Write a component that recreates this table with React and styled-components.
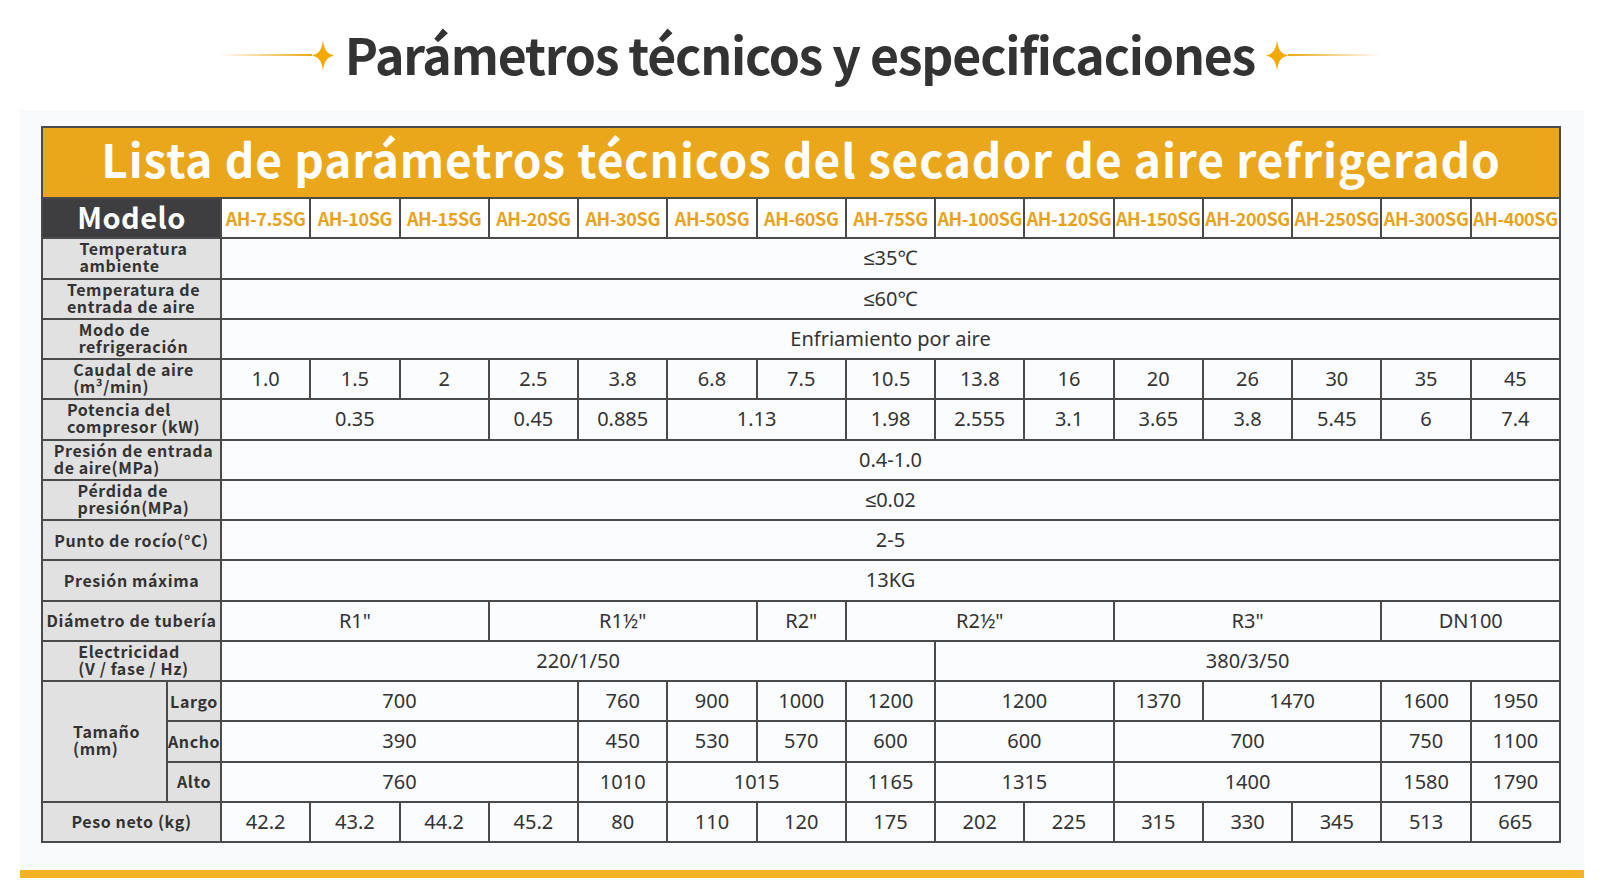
import React from "react";
import styled, { createGlobalStyle } from "styled-components";

const GlobalStyle = createGlobalStyle`
  html, body {
    margin: 0;
    padding: 0;
    background: #ffffff;
  }
  body {
    font-family: "Noto Sans CJK SC", "Noto Sans", sans-serif;
  }
`;

const Page = styled.div`
  width: 1600px;
  height: 896px;
  background: #ffffff;
  overflow: hidden;
`;

const Header = styled.header`
  height: 110px;
  display: flex;
  align-items: center;
  justify-content: center;
`;

const Rule = styled.span`
  display: block;
  width: 94px;
  height: 2px;
  background: linear-gradient(
    ${(props) => (props.flip ? "to left" : "to right")},
    rgba(236, 168, 24, 0),
    #eca818
  );
`;

const Star = styled.svg`
  display: block;
  width: 22px;
  height: 31px;
  flex: none;
`;

const Heading = styled.h1`
  margin: 0 11px;
  font-family: "Noto Sans CJK SC", sans-serif;
  font-weight: 700;
  font-size: 50px;
  letter-spacing: -1.2px;
  line-height: 1;
  color: #333333;
  padding-bottom: 4px;
  white-space: nowrap;
`;

const Panel = styled.section`
  margin-left: 20px;
  width: 1564px;
  background: #f9fafc;
  padding-top: 16px;
  box-sizing: border-box;
`;

const Table = styled.table`
  margin-left: 21px;
  width: 1520px;
  border-collapse: collapse;
  table-layout: fixed;
`;

const Row = styled.tr`
  height: ${(props) => props.height || "40.25px"};
`;

const Title = styled.th`
  border: 2px solid #4a4a4a;
  background: #eaa71b;
  color: #ffffff;
  font-family: "Noto Sans CJK SC", sans-serif;
  font-weight: 700;
  font-size: 46px;
  letter-spacing: 0.9px;
  line-height: 1;
  padding: 0 0 9px;
  white-space: nowrap;
`;

const ModelHead = styled.th`
  border: 2px solid #4a4a4a;
  background: #3e3e40;
  color: #ffffff;
  font-family: "Noto Sans CJK SC", sans-serif;
  font-weight: 700;
  font-size: 29px;
  letter-spacing: 0.5px;
  line-height: 1;
  padding: 0 0 3px;
`;

const ModelCell = styled.th`
  border: 2px solid #4a4a4a;
  background: #ffffff;
  color: #e8a21c;
  font-family: "Noto Sans CJK SC", sans-serif;
  font-weight: 700;
  font-size: 18px;
  letter-spacing: -0.4px;
  line-height: 1;
  white-space: nowrap;
  overflow: visible;
  padding: 0;
`;

const Label = styled.th`
  border: 2px solid #4a4a4a;
  background: #e1e1e1;
  color: #333333;
  font-family: "Noto Sans CJK SC", sans-serif;
  font-weight: 700;
  font-size: 16px;
  letter-spacing: 0.6px;
  line-height: 17px;
  padding: 0;
  white-space: nowrap;
`;

const LabelText = styled.span`
  display: inline-block;
  text-align: left;
  padding: ${(props) => (props.lines ? "0 0 2px 4px" : "0")};
`;

const Cell = styled.td`
  border: 2px solid #4a4a4a;
  background: #fbfcfe;
  color: #333333;
  font-family: "Noto Sans", sans-serif;
  font-weight: 400;
  font-size: 20px;
  line-height: 1.2;
  text-align: center;
  padding: 0;
  white-space: nowrap;
`;

const BottomBar = styled.div`
  margin-top: 27px;
  height: 8px;
  background: #f5b224;
`;

const StarIcon = () => (
  <Star viewBox="0 0 22 31">
    <path
      d="M11 0 C12 8.5 14 13.5 22 15.5 C14 17.5 12 22.5 11 31 C10 22.5 8 17.5 0 15.5 C8 13.5 10 8.5 11 0 Z"
      fill="#f2a900"
    />
  </Star>
);

const models = [
  "AH-7.5SG",
  "AH-10SG",
  "AH-15SG",
  "AH-20SG",
  "AH-30SG",
  "AH-50SG",
  "AH-60SG",
  "AH-75SG",
  "AH-100SG",
  "AH-120SG",
  "AH-150SG",
  "AH-200SG",
  "AH-250SG",
  "AH-300SG",
  "AH-400SG",
];

const each = (list) => list.map((v) => [v, 1]);

const rows = [
  { label: ["Temperatura", "ambiente"], cells: [["≤35℃", 15]] },
  { label: ["Temperatura de", "entrada de aire"], cells: [["≤60℃", 15]] },
  { label: ["Modo de", "refrigeración"], cells: [["Enfriamiento por aire", 15]] },
  {
    label: ["Caudal de aire", " (m³/min)"],
    cells: each([
      "1.0", "1.5", "2", "2.5", "3.8", "6.8", "7.5", "10.5",
      "13.8", "16", "20", "26", "30", "35", "45",
    ]),
  },
  {
    label: [" Potencia del", " compresor (kW)"],
    cells: [
      ["0.35", 3], ["0.45", 1], ["0.885", 1], ["1.13", 2], ["1.98", 1],
      ["2.555", 1], ["3.1", 1], ["3.65", 1], ["3.8", 1], ["5.45", 1],
      ["6", 1], ["7.4", 1],
    ],
  },
  { label: ["Presión de entrada", "de aire(MPa)"], cells: [["0.4-1.0", 15]] },
  { label: ["Pérdida de", "presión(MPa)"], cells: [["≤0.02", 15]] },
  { label: ["Punto de rocío(°C)"], cells: [["2-5", 15]] },
  { label: ["Presión máxima"], cells: [["13KG", 15]] },
  {
    label: ["Diámetro de tubería"],
    cells: [
      ['R1"', 3], ['R1½"', 3], ['R2"', 1], ['R2½"', 3], ['R3"', 3], ["DN100", 2],
    ],
  },
  {
    label: ["Electricidad", "(V / fase / Hz)"],
    cells: [["220/1/50", 8], ["380/3/50", 7]],
  },
];

const sizeRows = [
  {
    label: "Largo",
    cells: [
      ["700", 4], ["760", 1], ["900", 1], ["1000", 1], ["1200", 1],
      ["1200", 2], ["1370", 1], ["1470", 2], ["1600", 1], ["1950", 1],
    ],
  },
  {
    label: "Ancho",
    cells: [
      ["390", 4], ["450", 1], ["530", 1], ["570", 1], ["600", 1],
      ["600", 2], ["700", 3], ["750", 1], ["1100", 1],
    ],
  },
  {
    label: "Alto",
    cells: [
      ["760", 4], ["1010", 1], ["1015", 2], ["1165", 1], ["1315", 2],
      ["1400", 3], ["1580", 1], ["1790", 1],
    ],
  },
];

const weights = each([
  "42.2", "43.2", "44.2", "45.2", "80", "110", "120", "175",
  "202", "225", "315", "330", "345", "513", "665",
]);

const renderCells = (cells) =>
  cells.map(([value, span], i) => (
    <Cell key={i} colSpan={span}>
      {value}
    </Cell>
  ));

const App = () => {
  return (
    <Page>
      <GlobalStyle />
      <Header>
        <Rule />
        <StarIcon />
        <Heading>Parámetros técnicos y especificaciones</Heading>
        <StarIcon />
        <Rule flip />
      </Header>
      <Panel>
        <Table>
          <colgroup>
            <col style={{ width: "125px" }} />
            <col style={{ width: "54px" }} />
            {models.map((m) => (
              <col key={m} />
            ))}
          </colgroup>
          <tbody>
            <Row height="71px">
              <Title colSpan={17}>
                Lista de parámetros técnicos del secador de aire refrigerado
              </Title>
            </Row>
            <Row>
              <ModelHead colSpan={2}>Modelo</ModelHead>
              {models.map((m) => (
                <ModelCell key={m}>{m}</ModelCell>
              ))}
            </Row>
            {rows.map((row, i) => (
              <Row key={i}>
                <Label colSpan={2}>
                  <LabelText lines={row.label.length > 1}>
                    {row.label.map((line, j) => (
                      <React.Fragment key={j}>
                        {j > 0 && <br />}
                        {line}
                      </React.Fragment>
                    ))}
                  </LabelText>
                </Label>
                {renderCells(row.cells)}
              </Row>
            ))}
            {sizeRows.map((row, i) => (
              <Row key={row.label}>
                {i === 0 && (
                  <Label rowSpan={3}>
                    <LabelText lines>
                      Tamaño
                      <br />
                      (mm)
                    </LabelText>
                  </Label>
                )}
                <Label>{row.label}</Label>
                {renderCells(row.cells)}
              </Row>
            ))}
            <Row>
              <Label colSpan={2}>Peso neto (kg)</Label>
              {renderCells(weights)}
            </Row>
          </tbody>
        </Table>
        <BottomBar />
      </Panel>
    </Page>
  );
};

export default App;
